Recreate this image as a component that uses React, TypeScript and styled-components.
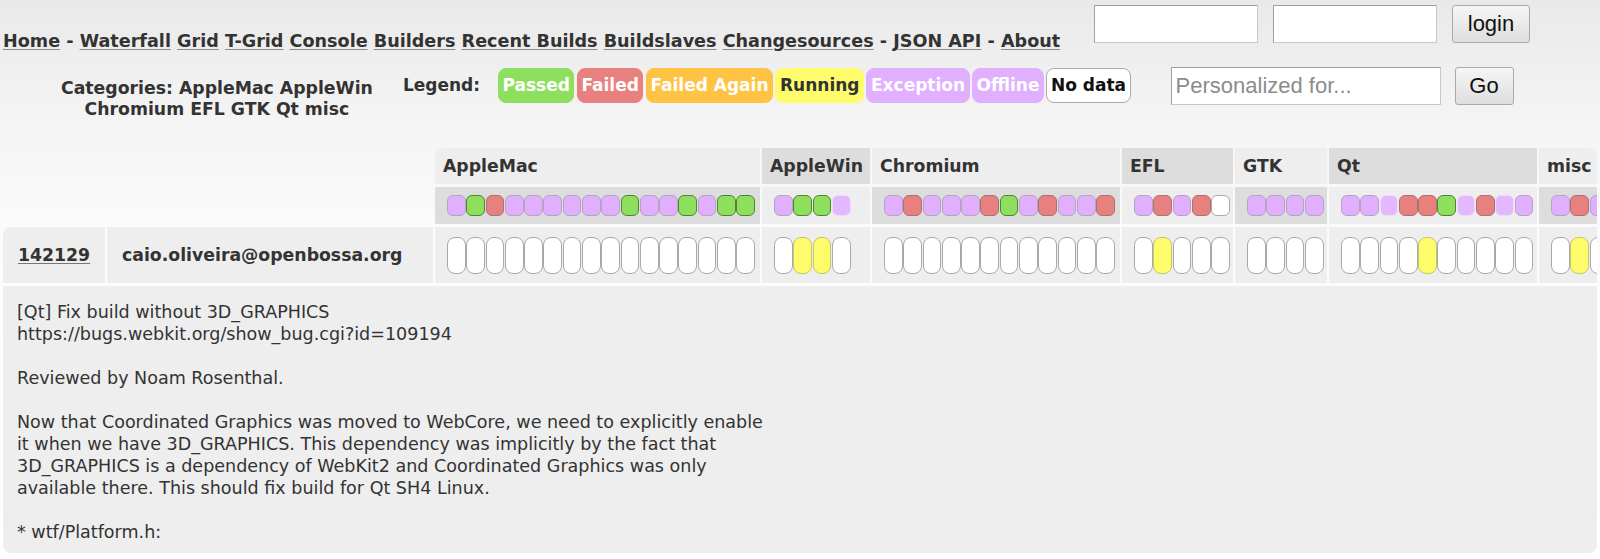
import React from "react";
import styled, { createGlobalStyle } from "styled-components";

type Kind = "success" | "failure" | "exception" | "offline" | "nodata" | "running";

const GlobalStyle = createGlobalStyle`
  html, body {
    margin: 0;
    padding: 0;
  }
  body {
    background: linear-gradient(to bottom, #e9e9e9 0px, #f4f4f4 120px, #fbfbfb 230px, #ffffff 559px);
    font-family: "DejaVu Sans", Verdana, sans-serif;
    color: #333;
    overflow: hidden;
  }
`;

const Page = styled.div`
  padding: 0 0 0 3px;
  width: 1597px;
  min-height: 559px;
`;

const TopBar = styled.div`
  display: flex;
  align-items: flex-start;
  height: 48px;
`;

const Nav = styled.div`
  margin-top: 31px;
  font-size: 17.6px;
  line-height: 20px;
  font-weight: bold;
  white-space: nowrap;
`;

const NavLink = styled.a`
  color: #333;
  text-decoration: underline;
  text-decoration-color: #8c8c8c;
  text-underline-offset: 2px;
  cursor: pointer;
`;

const LoginForm = styled.div`
  margin-left: auto;
  margin-right: 70px;
  margin-top: 5px;
  display: flex;
  gap: 15px;
`;

const TextInput = styled.input<{ $w: number }>`
  box-sizing: border-box;
  width: ${(p) => p.$w}px;
  height: 38px;
  background: #fff;
  border: 1px solid #c8c8c8;
  border-top-color: #a0a0a0;
  border-left-color: #a0a0a0;
  font-family: "Liberation Sans", Arial, sans-serif;
  font-size: 22px;
  padding: 0 4px;
  outline: none;
  &::placeholder {
    color: #8c8c8c;
  }
`;

const Button = styled.button<{ $w: number }>`
  box-sizing: border-box;
  width: ${(p) => p.$w}px;
  height: 38px;
  background: linear-gradient(to bottom, #f6f6f6, #dedede);
  border: 1px solid #a9a9a9;
  border-radius: 3px;
  font-family: "Liberation Sans", Arial, sans-serif;
  font-size: 22px;
  color: #111;
  padding: 0;
`;

const FilterRow = styled.div`
  display: flex;
  align-items: flex-start;
  padding-top: 19px;
`;

const Categories = styled.div`
  margin-left: 58px;
  margin-top: 11px;
  font-size: 17.3px;
  line-height: 21px;
  font-weight: bold;
  text-align: center;
  white-space: nowrap;
`;

const LegendLabel = styled.div`
  margin-left: 30px;
  margin-top: 1px;
  font-size: 17px;
  line-height: 35px;
  font-weight: bold;
`;

const Legend = styled.div`
  margin-left: 18px;
  margin-top: 1px;
  display: flex;
  gap: 2.5px;
`;

const legendColors: Record<string, { bg: string; border: string; fg: string }> = {
  Passed: { bg: "#8fdf5f", border: "#8fdf5f", fg: "#fff" },
  Failed: { bg: "#e98080", border: "#e98080", fg: "#fff" },
  "Failed Again": { bg: "#ffc343", border: "#ffc343", fg: "#fff" },
  Running: { bg: "#fffc6c", border: "#fffc6c", fg: "#333" },
  Exception: { bg: "#e0b0ff", border: "#e0b0ff", fg: "#fff" },
  Offline: { bg: "#e0b0ff", border: "#e0b0ff", fg: "#fff" },
  "No data": { bg: "#fff", border: "#aaa", fg: "#111" },
};

const LegendItem = styled.div<{ $bg: string; $border: string; $fg: string }>`
  box-sizing: border-box;
  height: 35px;
  line-height: 33px;
  padding: 0 3.5px;
  border-radius: 8px;
  border: 1px solid ${(p) => p.$border};
  background: ${(p) => p.$bg};
  color: ${(p) => p.$fg};
  font-size: 17px;
  font-weight: bold;
  white-space: nowrap;
`;

const Personal = styled.div`
  margin-left: 40px;
  display: flex;
  gap: 14px;
`;

const Grid = styled.div`
  margin-top: 28px;
  display: grid;
  grid-template-columns: 102px 326px 325px 108px 248px 111px 92px 208px 58px;
  column-gap: 2px;
  row-gap: 3px;
  overflow: hidden;
`;

const Spacer = styled.div`
  grid-column: span 2;
`;

const CatHeader = styled.div<{ $dark: boolean; $first?: boolean; $last?: boolean }>`
  height: 36px;
  line-height: 36px;
  padding-left: 8px;
  font-size: 17.3px;
  font-weight: bold;
  color: #333;
  background: ${(p) => (p.$dark ? "#dddddd" : "#eeeeee")};
  border-top-left-radius: ${(p) => (p.$first ? "8px" : "0")};
  border-top-right-radius: ${(p) => (p.$last ? "8px" : "0")};
  white-space: nowrap;
  overflow: hidden;
`;

const BoxCell = styled.div<{ $dark: boolean; $h: number }>`
  height: ${(p) => p.$h}px;
  padding-left: 12px;
  display: flex;
  align-items: center;
  gap: 0.6px;
  background: ${(p) => (p.$dark ? "#dddddd" : "#eeeeee")};
  overflow: hidden;
`;

const boxColors: Record<Kind, { bg: string; border: string }> = {
  success: { bg: "#8fdf5f", border: "#4f8530" },
  failure: { bg: "#e98080", border: "#a77272" },
  exception: { bg: "#e0b0ff", border: "#b7a2c2" },
  offline: { bg: "#e4b8ff", border: "rgba(255,255,255,0.45)" },
  nodata: { bg: "#ffffff", border: "#a9a9a9" },
  running: { bg: "#fffc6c", border: "#c5c56d" },
};

const Box = styled.span<{ $kind: Kind; $h: number }>`
  flex: none;
  box-sizing: border-box;
  width: 18.7px;
  height: ${(p) => p.$h}px;
  border-radius: ${(p) => (p.$h > 30 ? 8 : 6)}px;
  border: 1.5px solid ${(p) => boxColors[p.$kind].border};
  background: ${(p) => boxColors[p.$kind].bg};
`;

const RevCell = styled.div`
  height: 56px;
  display: flex;
  align-items: center;
  background: #eeeeee;
  font-size: 17.3px;
  font-weight: bold;
`;

const Revision = styled(RevCell)`
  border-top-left-radius: 8px;
  padding-left: 15px;
  a {
    color: #333;
    text-decoration: underline;
    text-decoration-color: #777;
    text-underline-offset: 2px;
  }
`;

const Author = styled(RevCell)`
  padding-left: 15px;
`;

const Comments = styled.div`
  grid-column: 1 / -1;
  background: #eeeeee;
  border-radius: 0 0 8px 8px;
  padding: 15px 14px 9px;
  font-size: 17.55px;
  line-height: 22px;
  white-space: pre-line;
  color: #333;
  height: 243px;
`;

const S: Kind = "success";
const F: Kind = "failure";
const E: Kind = "exception";
const O: Kind = "offline";
const N: Kind = "nodata";
const R: Kind = "running";

const categories: { name: string; builders: Kind[]; revs: Kind[] }[] = [
  { name: "AppleMac", builders: [E, S, F, E, E, E, E, E, E, S, E, E, S, E, S, S], revs: Array(16).fill(N) },
  { name: "AppleWin", builders: [E, S, S, O], revs: [N, R, R, N] },
  { name: "Chromium", builders: [E, F, E, E, E, F, S, E, F, E, E, F], revs: Array(12).fill(N) },
  { name: "EFL", builders: [E, F, E, F, N], revs: [N, R, N, N, N] },
  { name: "GTK", builders: [E, E, E, E], revs: [N, N, N, N] },
  { name: "Qt", builders: [E, E, O, F, F, S, O, F, O, E], revs: [N, N, N, N, R, N, N, N, N, N] },
  { name: "misc", builders: [E, F, E], revs: [N, R, N] },
];

const navItems: (string | null)[] = [
  "Home", null, "Waterfall", "Grid", "T-Grid", "Console", "Builders", "Recent Builds",
  "Buildslaves", "Changesources", null, "JSON API", null, "About",
];

const legend = ["Passed", "Failed", "Failed Again", "Running", "Exception", "Offline", "No data"];

const comment = `[Qt] Fix build without 3D_GRAPHICS
https://bugs.webkit.org/show_bug.cgi?id=109194

Reviewed by Noam Rosenthal.

Now that Coordinated Graphics was moved to WebCore, we need to explicitly enable
it when we have 3D_GRAPHICS. This dependency was implicitly by the fact that
3D_GRAPHICS is a dependency of WebKit2 and Coordinated Graphics was only
available there. This should fix build for Qt SH4 Linux.

* wtf/Platform.h:`;

const App = () => {
  return (
    <Page>
      <GlobalStyle />
      <TopBar>
        <Nav>
          {navItems.map((item, i) => (
            <React.Fragment key={i}>
              {i > 0 && " "}
              {item === null ? "-" : <NavLink>{item}</NavLink>}
            </React.Fragment>
          ))}
        </Nav>
        <LoginForm>
          <TextInput $w={164} />
          <TextInput $w={164} type="password" />
          <Button $w={78}>login</Button>
        </LoginForm>
      </TopBar>
      <FilterRow>
        <Categories>
          Categories: AppleMac AppleWin
          <br />
          Chromium EFL GTK Qt misc
        </Categories>
        <LegendLabel>Legend:</LegendLabel>
        <Legend>
          {legend.map((label) => {
            const c = legendColors[label];
            return (
              <LegendItem key={label} $bg={c.bg} $border={c.border} $fg={c.fg}>
                {label}
              </LegendItem>
            );
          })}
        </Legend>
        <Personal>
          <TextInput $w={270} placeholder="Personalized for..." />
          <Button $w={59}>Go</Button>
        </Personal>
      </FilterRow>
      <Grid>
        <Spacer />
        {categories.map((c, i) => (
          <CatHeader key={c.name} $dark={i % 2 === 1} $first={i === 0} $last={i === categories.length - 1}>
            {c.name}
          </CatHeader>
        ))}
        <Spacer />
        {categories.map((c, i) => (
          <BoxCell key={c.name} $dark={i % 2 === 0} $h={37}>
            {c.builders.map((k, j) => (
              <Box key={j} $kind={k} $h={21} />
            ))}
          </BoxCell>
        ))}
        <Revision>
          <a>142129</a>
        </Revision>
        <Author>caio.oliveira@openbossa.org</Author>
        {categories.map((c) => (
          <BoxCell key={c.name} $dark={false} $h={56}>
            {c.revs.map((k, j) => (
              <Box key={j} $kind={k} $h={37} />
            ))}
          </BoxCell>
        ))}
        <Comments>{comment}</Comments>
      </Grid>
    </Page>
  );
};

export default App;
